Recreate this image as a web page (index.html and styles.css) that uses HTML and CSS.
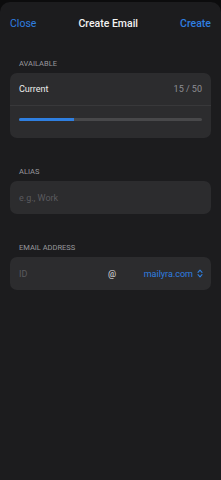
FILE: index.html
```html
<!DOCTYPE html>
<html lang="en">

<head>
    <meta charset="UTF-8">
    <meta name="viewport" content="width=device-width, initial-scale=1.0">
    <title>Create Email</title>
    <link rel="stylesheet" href="styles.css">
</head>

<body>
    <div class="sheet">
        <header class="nav">
            <a class="nav-btn">Close</a>
            <h1>Create Email</h1>
            <a class="nav-btn strong">Create</a>
        </header>

        <section class="group">
            <p class="label">AVAILABLE</p>
            <div class="card">
                <div class="row">
                    <span>Current</span>
                    <span class="muted">15 / 50</span>
                </div>
                <div class="bar-row">
                    <div class="bar"><div class="fill" style="width: 30%"></div></div>
                </div>
            </div>
        </section>

        <section class="group">
            <p class="label">ALIAS</p>
            <div class="card">
                <input class="field" type="text" placeholder="e.g., Work">
            </div>
        </section>

        <section class="group">
            <p class="label">EMAIL ADDRESS</p>
            <div class="card address">
                <input class="field id" type="text" placeholder="ID">
                <span class="at">@</span>
                <span class="domain">mailyra.com
                    <svg width="6" height="9" viewBox="0 0 6 9">
                        <path d="M1 3.4 L3 1.2 L5 3.4 M1 5.6 L3 7.8 L5 5.6" fill="none" stroke="#2f7fe0" stroke-width="1.1" stroke-linecap="round" stroke-linejoin="round"/>
                    </svg>
                </span>
            </div>
        </section>
    </div>
</body>

</html>
```

FILE: styles.css
```css
* {
    padding: 0;
    margin: 0;
    box-sizing: border-box;
}

html,
body {
    height: 100%;
}

body {
    background: #0c0c0d;
    font-family: Roboto, "Liberation Sans", sans-serif;
    color: #ececec;
    padding-top: 2px;
}

.sheet {
    background: #1c1c1e;
    height: 100%;
    border-radius: 10px 10px 0 0;
    padding: 0 10px;
}

.nav {
    display: flex;
    justify-content: space-between;
    align-items: center;
    height: 43px;
}

.nav h1 {
    font-size: 10.5px;
    font-weight: 500;
    color: #f2f2f2;
}

.nav-btn {
    font-size: 10.5px;
    color: #2f7fe0;
}

.nav-btn.strong {
    font-weight: 500;
}

.group {
    margin-top: 29px;
}

.group:first-of-type {
    margin-top: 14px;
}

.label {
    font-size: 7.5px;
    line-height: 10px;
    color: #98989d;
    padding-left: 9px;
    margin-bottom: 4px;
}

.card {
    background: #2c2c2e;
    border-radius: 7px;
}

.row {
    display: flex;
    justify-content: space-between;
    align-items: center;
    height: 33px;
    padding: 0 9px;
    font-size: 9px;
    border-bottom: 1px solid #38383a;
}

.muted {
    color: #8e8e93;
}

.bar-row {
    padding: 12px 9px 17px;
}

.bar {
    height: 3px;
    background: #48484a;
    border-radius: 2px;
    overflow: hidden;
}

.fill {
    height: 100%;
    background: #2f7fe0;
}

.field {
    display: block;
    width: 100%;
    height: 33px;
    background: transparent;
    border: 0;
    outline: none;
    padding: 0 9px;
    font-family: inherit;
    font-size: 9px;
    color: #ececec;
}

.field::placeholder {
    color: #5a5a5e;
}

.address {
    display: flex;
    align-items: center;
    padding-right: 8px;
}

.address .field.id {
    width: 98px;
    flex: none;
}

.at {
    font-size: 9px;
    color: #e0e0e0;
    flex: 1;
}

.domain {
    display: flex;
    align-items: center;
    gap: 4px;
    font-size: 9px;
    color: #2f7fe0;
}
```
